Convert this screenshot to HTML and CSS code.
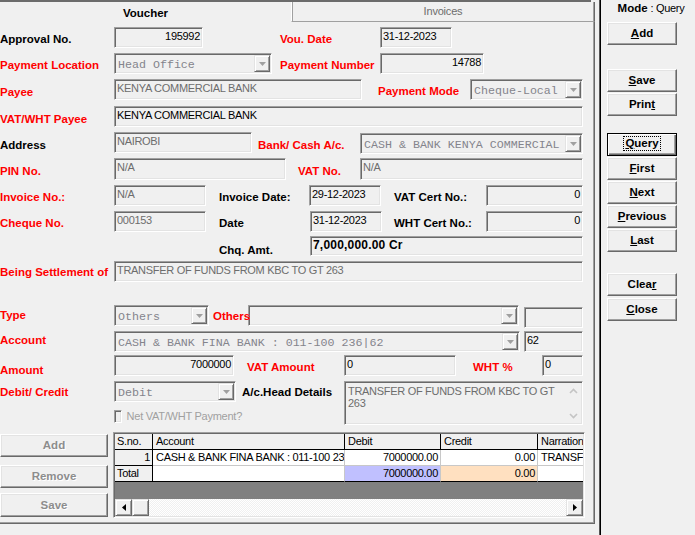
FILE: index.html
```html
<!DOCTYPE html>
<html>
<head>
<meta charset="utf-8">
<title>Voucher</title>
<link rel="stylesheet" href="styles.css">
</head>
<body>
<div class="window">
  <div class="main">
    <div class="topband"></div>
    <div class="tabs">
      <div class="tab-on">Voucher</div>
      <div class="tab-off">Invoices</div>
    </div>
    <div class="page">
      <div class="row mt5">
        <div class="lbl w114">Approval No.</div>
        <div class="fld w89 num">195992</div>
        <div class="lbl red ml77 w100">Vou. Date</div>
        <div class="fld w72">31-12-2023</div>
      </div>
      <div class="row mt5">
        <div class="lbl red w114">Payment Location</div>
        <div class="combo w158"><span class="ctext">Head Office</span><span class="cbtn"><svg width="7" height="4" viewBox="0 0 7 4"><polygon points="0,0 7,0 3.5,4" fill="#a0a0a0"/></svg></span></div>
        <div class="lbl red ml8 w100">Payment Number</div>
        <div class="fld w104 num">14788</div>
      </div>
      <div class="row mt5">
        <div class="lbl red w114 p7">Payee</div>
        <div class="fld w248 gray">KENYA COMMERCIAL BANK</div>
        <div class="lbl red ml16 w92">Payment Mode</div>
        <div class="combo w113"><span class="ctext">Cheque-Local</span><span class="cbtn"><svg width="7" height="4" viewBox="0 0 7 4"><polygon points="0,0 7,0 3.5,4" fill="#a0a0a0"/></svg></span></div>
      </div>
      <div class="row mt6">
        <div class="lbl red w114 p7">VAT/WHT Payee</div>
        <div class="fld w469">KENYA COMMERCIAL BANK</div>
      </div>
      <div class="row mt5">
        <div class="lbl w114 p7">Address</div>
        <div class="fld w138 gray">NAIROBI</div>
        <div class="lbl red ml6 w102 p7">Bank/ Cash A/c.</div>
        <div class="combo w223 mt1"><span class="ctext">CASH &amp; BANK KENYA COMMERCIAL</span><span class="cbtn"><svg width="7" height="4" viewBox="0 0 7 4"><polygon points="0,0 7,0 3.5,4" fill="#a0a0a0"/></svg></span></div>
      </div>
      <div class="row mt5 h22">
        <div class="lbl red w114 p7">PIN No.</div>
        <div class="fld w172 gray">N/A</div>
        <div class="lbl red ml12 w62 p7">VAT No.</div>
        <div class="fld w223 gray">N/A</div>
      </div>
      <div class="row mt5">
        <div class="lbl red w114">Invoice No.:</div>
        <div class="fld w92 gray">N/A</div>
        <div class="lbl ml13 w90">Invoice Date:</div>
        <div class="fld w72">29-12-2023</div>
        <div class="lbl ml13 w92">VAT Cert No.:</div>
        <div class="fld w97 num">0</div>
      </div>
      <div class="row mt5">
        <div class="lbl red w114">Cheque No.</div>
        <div class="fld w92 gray">000153</div>
        <div class="lbl ml13 w91">Date</div>
        <div class="fld w72">31-12-2023</div>
        <div class="lbl ml12 w92">WHT Cert No.:</div>
        <div class="fld w97 num">0</div>
      </div>
      <div class="row mt4 h20">
        <div class="lbl ml219 w91 p8">Chq. Amt.</div>
        <div class="fld w273 amt">7,000,000.00 Cr</div>
      </div>
      <div class="row mt5">
        <div class="lbl red w114 p5">Being Settlement of</div>
        <div class="fld w469 gray">TRANSFER OF FUNDS FROM KBC TO GT 263</div>
      </div>
      <div class="row mt23">
        <div class="lbl red w114 p4">Type</div>
        <div class="combo w95"><span class="ctext">Others</span><span class="cbtn"><svg width="7" height="4" viewBox="0 0 7 4"><polygon points="0,0 7,0 3.5,4" fill="#a0a0a0"/></svg></span></div>
        <div class="lbl red ml4 w35 p5 front">Others</div>
        <div class="combo w271"><span class="ctext"></span><span class="cbtn"><svg width="7" height="4" viewBox="0 0 7 4"><polygon points="0,0 7,0 3.5,4" fill="#a0a0a0"/></svg></span></div>
        <div class="fld ml5 w59 mt2"></div>
      </div>
      <div class="row mt5">
        <div class="lbl red w114 p3">Account</div>
        <div class="combo w406"><span class="ctext">CASH &amp; BANK FINA BANK : 011-100 236|62</span><span class="cbtn"><svg width="7" height="4" viewBox="0 0 7 4"><polygon points="0,0 7,0 3.5,4" fill="#a0a0a0"/></svg></span></div>
        <div class="fld ml4 w59">62</div>
      </div>
      <div class="row mt3">
        <div class="lbl red w114 p9">Amount</div>
        <div class="fld w120 num">7000000</div>
        <div class="lbl red ml13 w97">VAT Amount</div>
        <div class="fld w112">0</div>
        <div class="lbl red ml17 w69">WHT %</div>
        <div class="fld w41">0</div>
      </div>
      <div class="row mt5 h44">
        <div class="dcblock">
          <div class="subrow">
            <div class="lbl red w114 p5">Debit/ Credit</div>
            <div class="combo w122"><span class="ctext">Debit</span><span class="cbtn"><svg width="7" height="4" viewBox="0 0 7 4"><polygon points="0,0 7,0 3.5,4" fill="#a0a0a0"/></svg></span></div>
          </div>
          <div class="chkrow">
            <span class="chk"></span>
            <span class="chklbl">Net VAT/WHT Payment?</span>
          </div>
        </div>
        <div class="lbl w102 p5">A/c.Head Details</div>
        <div class="memo w239">
          <div class="memotext">TRANSFER OF FUNDS FROM KBC TO GT<br>263</div>
          <div class="vscroll">
            <svg width="9" height="6" viewBox="0 0 9 6"><polyline points="1,5 4.5,1.5 8,5" fill="none" stroke="#c4c4c4" stroke-width="1.6"/></svg>
            <svg width="9" height="6" viewBox="0 0 9 6"><polyline points="1,1 4.5,4.5 8,1" fill="none" stroke="#c4c4c4" stroke-width="1.6"/></svg>
          </div>
        </div>
      </div>
      <div class="gridblock">
        <div class="gbtns">
          <div class="btn gbtn">Add</div>
          <div class="btn gbtn mt8">Remove</div>
          <div class="btn gbtn h24 mt5">Save</div>
        </div>
        <div class="grid">
          <div class="gbody">
            <div class="grow ghead">
              <div class="gc c-sno">S.no.</div>
              <div class="gc c-acc">Account</div>
              <div class="gc c-deb">Debit</div>
              <div class="gc c-cre">Credit</div>
              <div class="gc c-nar">Narration</div>
            </div>
            <div class="grow">
              <div class="gc c-sno fix r">1</div>
              <div class="gc c-acc">CASH &amp; BANK FINA BANK : 011-100 236|62</div>
              <div class="gc c-deb r">7000000.00</div>
              <div class="gc c-cre r">0.00</div>
              <div class="gc c-nar">TRANSFER OF FUNDS</div>
            </div>
            <div class="grow gtotal">
              <div class="gc c-sno fix">Total</div>
              <div class="gc c-acc"></div>
              <div class="gc c-deb r lav">7000000.00</div>
              <div class="gc c-cre r peach">0.00</div>
              <div class="gc c-nar"></div>
            </div>
          </div>
          <div class="hscroll">
            <div class="sbtn"><svg width="4" height="7" viewBox="0 0 4 7"><polygon points="4,0 4,7 0,3.5" fill="#000"/></svg></div>
            <div class="sbtn"></div>
            <div class="strack"></div>
            <div class="sbtn"><svg width="4" height="7" viewBox="0 0 4 7"><polygon points="0,0 0,7 4,3.5" fill="#000"/></svg></div>
          </div>
        </div>
      </div>
    </div>
  </div>
  <div class="sep"></div>
  <div class="side">
    <div class="mode"><b>Mode</b> : Query</div>
    <div class="btn sbutton mt7"><u>A</u>dd</div>
    <div class="btn sbutton mt24"><u>S</u>ave</div>
    <div class="btn sbutton mt1">Prin<u>t</u></div>
    <div class="btn sbutton mt17 focus"><span class="focusrect"><u>Q</u>uery</span></div>
    <div class="btn sbutton mt1"><u>F</u>irst</div>
    <div class="btn sbutton mt1"><u>N</u>ext</div>
    <div class="btn sbutton mt1"><u>P</u>revious</div>
    <div class="btn sbutton mt1"><u>L</u>ast</div>
    <div class="btn sbutton mt21">Clea<u>r</u></div>
    <div class="btn sbutton mt2"><u>C</u>lose</div>
  </div>
</div>
</body>
</html>
```
FILE: styles.css
```css
* { box-sizing: border-box; }
html, body { margin: 0; padding: 0; }
body {
  background: #f0f0f0;
  font-family: "Liberation Sans", Arial, sans-serif;
  font-size: 11px;
  color: #000;
  width: 695px;
  height: 535px;
  overflow: hidden;
}
.window { display: flex; width: 695px; height: 535px; }
.main { width: 595px; flex: none; }
.topband { height: 2px; width: 591px; background: #6b6b6b; }
.tabs { display: flex; height: 20px; }
.tab-on {
  width: 291px;
  font-weight: bold;
  font-size: 11.5px;
  text-align: center;
  padding-top: 3px;
  line-height: 17px;
}
.tab-off {
  width: 304px;
  border-left: 1px solid #fff;
  border-right: 1px solid #696969;
  border-bottom: 1px solid #a0a0a0;
  box-shadow: inset 1px 0 #a0a0a0, inset -1px 0 #a0a0a0;
  text-align: center;
  color: #6d6d6d;
  padding-top: 1px;
  line-height: 17px;
  letter-spacing: -0.2px;
}
.page {
  width: 595px;
  height: 502px;
  border-right: 1px solid #696969;
  border-bottom: 1px solid #696969;
  box-shadow: inset -1px -1px 0 #a0a0a0;
  overflow: hidden;
}
.row { display: flex; height: 21px; flex: none; }
.h22 { height: 22px; }
.h20 { height: 20px; }
.h44 { height: 44px; align-items: flex-start; }

.lbl {
  flex: none;
  font-weight: bold;
  font-size: 11.5px;
  line-height: 13px;
  padding-top: 6px;
  white-space: nowrap;
  color: #000;
}
.red { color: #f00; }
.p3 { padding-top: 3px; }
.p4 { padding-top: 4px; }
.p5 { padding-top: 5px; }
.p7 { padding-top: 7px; }
.p8 { padding-top: 8px; }
.p9 { padding-top: 9px; }
.front { position: relative; z-index: 1; }

.fld {
  flex: none;
  height: 100%;
  border: 1px solid;
  border-color: #a0a0a0 #fff #fff #a0a0a0;
  box-shadow: inset 1px 1px #696969, inset -1px -1px #e3e3e3;
  background: #f0f0f0;
  padding: 2px 2px 0 2px;
  line-height: 13px;
  white-space: nowrap;
  overflow: hidden;
  letter-spacing: -0.3px;
  color: #000;
}
.h44 .fld, .row .fld { height: 21px; }
.h22 .fld { height: 22px; }
.h20 .fld { height: 20px; }
.num { text-align: right; }
.gray { color: #6d6d6d; }
.amt {
  font-weight: bold;
  font-size: 12px;
  letter-spacing: 0.2px;
  padding-top: 1px;
  line-height: 14px;
}

.combo {
  flex: none;
  display: flex;
  height: 21px;
  border: 1px solid;
  border-color: #a0a0a0 #fff #fff #a0a0a0;
  box-shadow: inset 1px 1px #696969, inset -1px -1px #e3e3e3;
  background: #f0f0f0;
}
.ctext {
  flex: 1;
  min-width: 0;
  font-family: "Liberation Mono", "Courier New", monospace;
  font-size: 11.65px;
  line-height: 13px;
  color: #84848c;
  padding: 4px 0 0 3px;
  white-space: pre;
  overflow: hidden;
}
.cbtn {
  flex: none;
  width: 16px;
  height: 17px;
  margin: 1px 1px 1px 0;
  background: #f0f0f0;
  border: 1px solid;
  border-color: #e3e3e3 #696969 #696969 #e3e3e3;
  box-shadow: inset 1px 1px #fff, inset -1px -1px #a0a0a0;
  display: flex;
  align-items: center;
  justify-content: center;
}
.cbtn svg { display: block; margin-top: 1px; }

.memo {
  flex: none;
  display: flex;
  height: 44px;
  border: 1px solid;
  border-color: #a0a0a0 #fff #fff #a0a0a0;
  box-shadow: inset 1px 1px #696969, inset -1px -1px #e3e3e3;
  padding: 1px;
  background: #f0f0f0;
}
.memotext {
  flex: 1;
  padding: 2px 0 0 2px;
  line-height: 11px;
  color: #6d6d6d;
  letter-spacing: -0.3px;
  white-space: nowrap;
  overflow: hidden;
}
.memotext { line-height: 12px; }
.vscroll {
  flex: none;
  width: 16px;
  display: flex;
  flex-direction: column;
  justify-content: space-between;
  align-items: center;
  padding: 5px 0 4px;
}
.vscroll svg { display: block; }

.dcblock { flex: none; width: 242px; }
.subrow { display: flex; height: 21px; }
.chkrow {
  display: flex;
  margin-top: 8px;
  padding-left: 114px;
  height: 13px;
}
.chk {
  width: 13px;
  height: 13px;
  border: 1px solid;
  border-color: #a0a0a0 #fff #fff #a0a0a0;
  box-shadow: inset 1px 1px #696969, inset -1px -1px #e3e3e3;
  background: #f0f0f0;
}
.chklbl {
  margin-left: 5px;
  line-height: 13px;
  color: #a0a0a0;
  letter-spacing: -0.25px;
  white-space: nowrap;
}

.gridblock { display: flex; height: 86px; margin-top: 7px; }
.gbtns { flex: none; width: 108px; margin-right: 5px; padding-top: 2px; }
.btn {
  height: 23px;
  border: 1px solid;
  border-color: #fff #696969 #696969 #fff;
  box-shadow: inset -1px -1px #a0a0a0, inset 1px 1px #e3e3e3;
  background: #f0f0f0;
  font-weight: bold;
  font-size: 11.5px;
  line-height: 21px;
  text-align: center;
  white-space: nowrap;
}
.gbtn { width: 108px; color: #8d8d8d; text-shadow: 1px 1px 0 #fff; }
.h24 { height: 24px; line-height: 22px; }

.grid {
  flex: none;
  width: 472px;
  height: 86px;
  border: 1px solid;
  border-color: #a0a0a0 #fff #fff #a0a0a0;
  box-shadow: inset 1px 1px #696969, inset -1px -1px #e3e3e3;
  padding: 1px;
  background: #f0f0f0;
}
.gbody { height: 65px; background: #808080; overflow: hidden; }
.grow { display: flex; height: 16px; width: 560px; }
.gc {
  flex: none;
  height: 16px;
  border-right: 1px solid #c8c8c8;
  border-bottom: 1px solid #c8c8c8;
  background: #fff;
  padding: 0 2px 0 3px;
  line-height: 15px;
  white-space: nowrap;
  overflow: hidden;
  letter-spacing: -0.3px;
}
.ghead .gc { background: #f0f0f0; border-color: #000; }
.fix { background: #f0f0f0; border-color: #000; }
.gtotal .gc { border-bottom-color: #000; }
.c-sno { width: 38px; padding-left: 2px; }
.c-acc { width: 192px; }
.c-deb { width: 96px; }
.c-cre { width: 97px; }
.c-nar { width: 97px; }
.r { text-align: right; padding-right: 2px; }
.lav { background: #c0c0ff; }
.peach { background: #ffe0c0; }

.hscroll { display: flex; height: 17px; }
.sbtn {
  flex: none;
  width: 17px;
  height: 17px;
  background: #f0f0f0;
  border: 1px solid;
  border-color: #e3e3e3 #696969 #696969 #e3e3e3;
  box-shadow: inset 1px 1px #fff, inset -1px -1px #a0a0a0;
  display: flex;
  align-items: center;
  justify-content: center;
}
.sbtn svg { display: block; }
.strack {
  flex: 1;
  background: repeating-conic-gradient(#f0f0f0 0 25%, #fff 0 50%) 0 0 / 2px 2px;
}

.sep {
  flex: none;
  width: 2px;
  margin-left: 4px;
  background: #000;
  box-shadow: inset 1px 0 #555;
}
.side {
  flex: none;
  width: 94px;
  padding-left: 6px;
  display: flex;
  flex-direction: column;
}
.mode {
  width: 88px;
  text-align: center;
  padding-top: 2px;
  line-height: 13px;
  font-size: 11px;
  letter-spacing: -0.3px;
  white-space: nowrap;
}
.mode b { font-size: 11.5px; letter-spacing: 0; }
.sbutton { width: 70px; color: #000; }
.focus {
  border: 1px solid #000;
  box-shadow: inset 1px 1px #fff, inset -1px -1px #696969, inset -2px -2px #a0a0a0;
}
.focusrect {
  display: inline-block;
  border: 1px dotted #000;
  line-height: 13px;
  padding: 0 1px;
  vertical-align: 1px;
}

.w35 { width: 35px; } .w41 { width: 41px; } .w59 { width: 59px; } .w62 { width: 62px; }
.w69 { width: 69px; } .w72 { width: 72px; } .w89 { width: 89px; } .w90 { width: 90px; }
.w91 { width: 91px; } .w92 { width: 92px; } .w95 { width: 95px; } .w97 { width: 97px; }
.w100 { width: 100px; } .w102 { width: 102px; } .w104 { width: 104px; } .w112 { width: 112px; }
.w113 { width: 113px; } .w114 { width: 114px; } .w120 { width: 120px; } .w122 { width: 122px; }
.w138 { width: 138px; } .w158 { width: 158px; } .w172 { width: 172px; } .w223 { width: 223px; }
.w239 { width: 239px; } .w248 { width: 248px; } .w271 { width: 271px; } .w273 { width: 273px; }
.w406 { width: 406px; } .w469 { width: 469px; }
.ml4 { margin-left: 4px; } .ml5 { margin-left: 5px; } .ml6 { margin-left: 6px; }
.ml8 { margin-left: 8px; } .ml12 { margin-left: 12px; } .ml13 { margin-left: 13px; }
.ml16 { margin-left: 16px; } .ml17 { margin-left: 17px; } .ml77 { margin-left: 77px; }
.ml219 { margin-left: 219px; }
.mt1 { margin-top: 1px; } .mt2 { margin-top: 2px; } .mt3 { margin-top: 3px; }
.mt4 { margin-top: 4px; } .mt5 { margin-top: 5px; } .mt6 { margin-top: 6px; }
.mt7 { margin-top: 7px; } .mt8 { margin-top: 8px; } .mt17 { margin-top: 17px; }
.mt21 { margin-top: 21px; } .mt23 { margin-top: 23px; } .mt24 { margin-top: 24px; }
```
